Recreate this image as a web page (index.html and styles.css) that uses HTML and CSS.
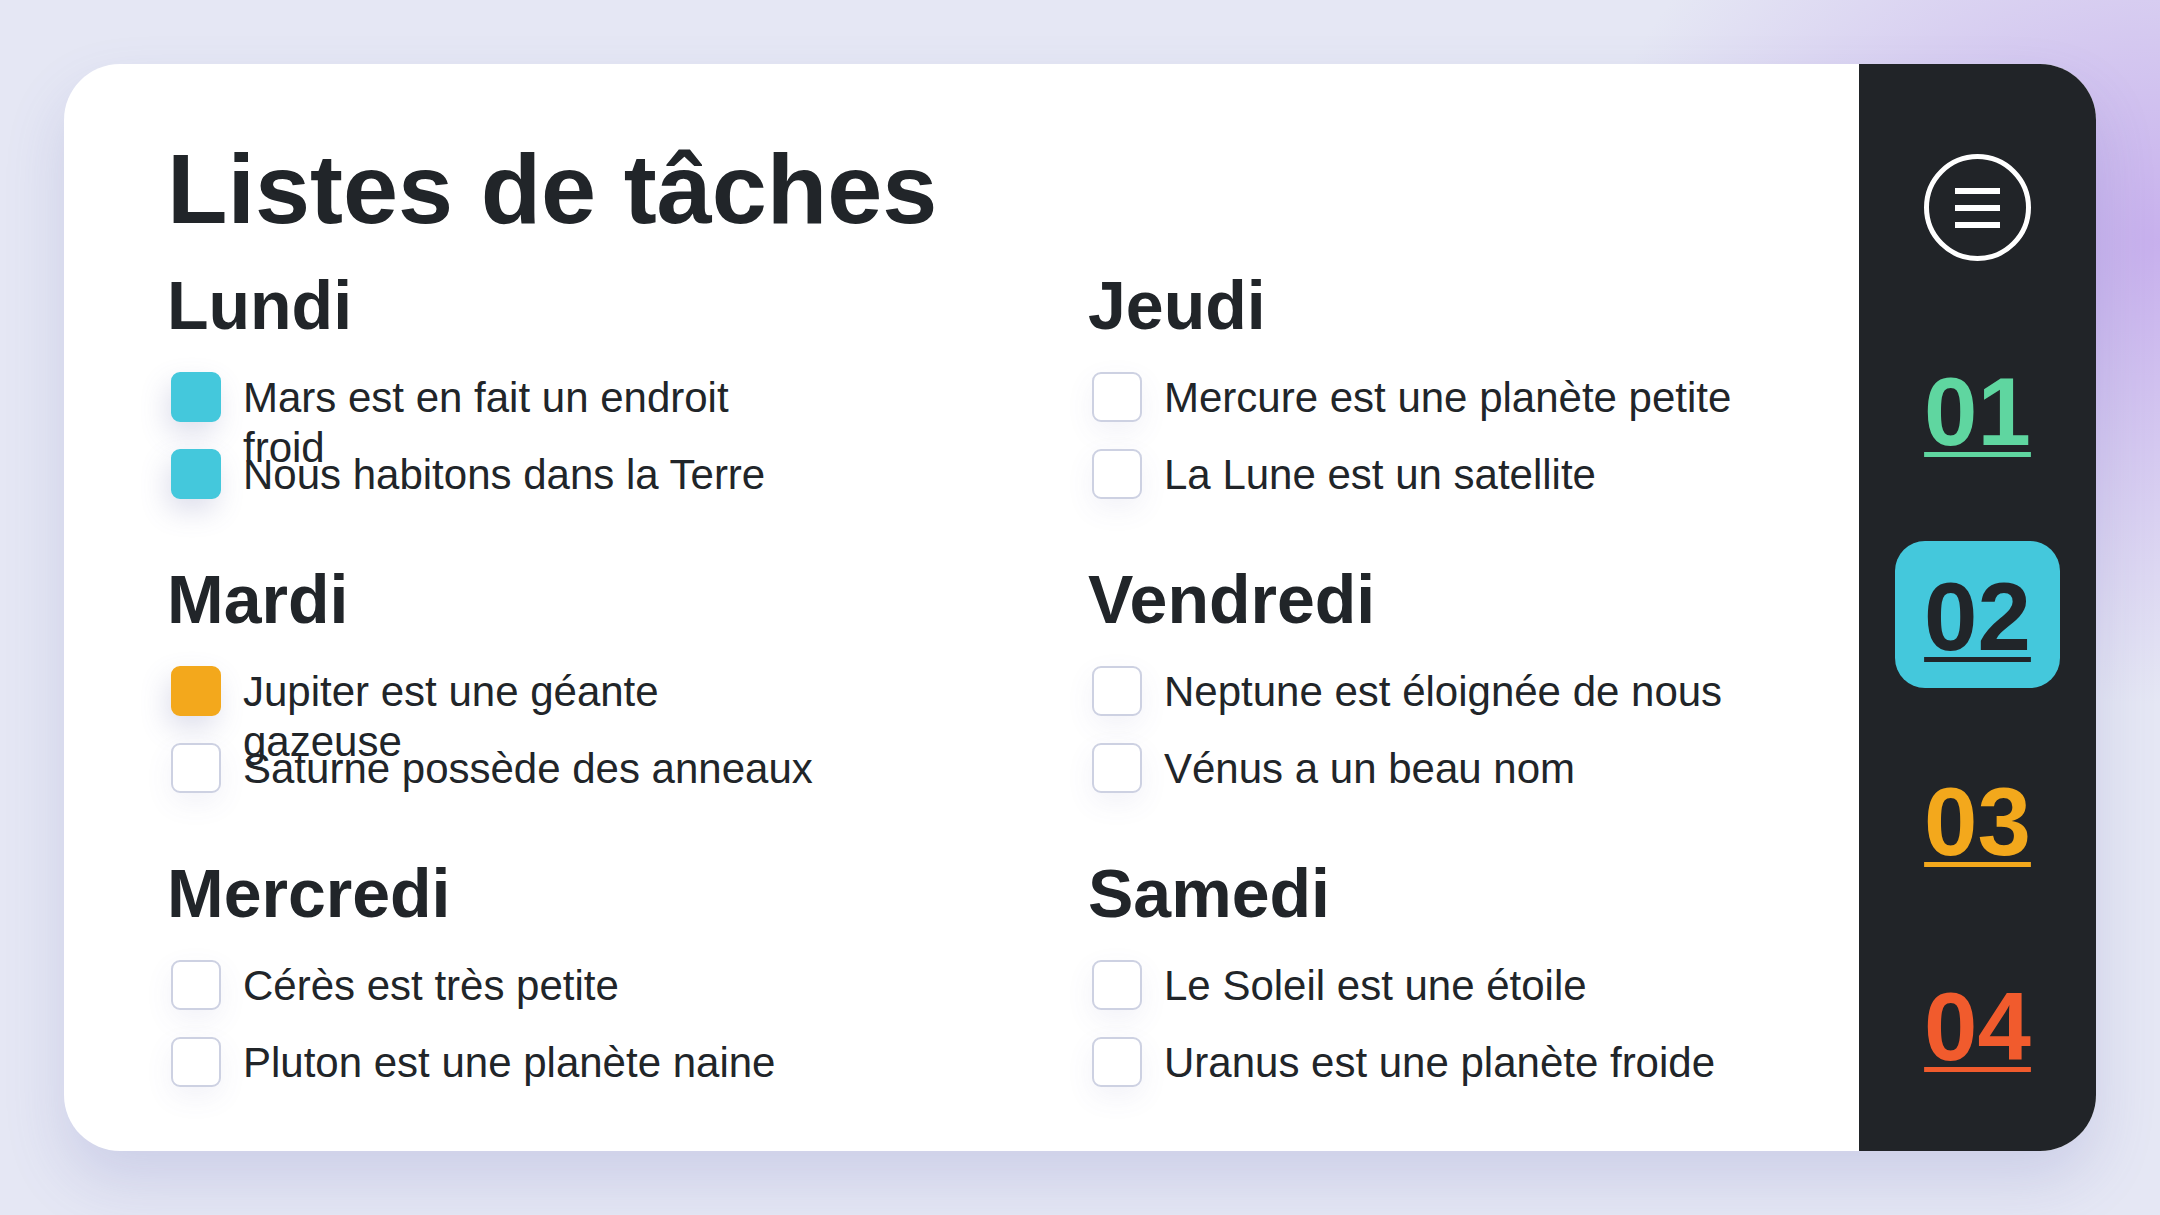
FILE: index.html
```html
<!DOCTYPE html>
<html lang="fr">
  <head>
    <meta charset="UTF-8" />
    <meta name="viewport" content="width=device-width, initial-scale=1.0" />
    <title>Listes de tâches</title>
    <link rel="stylesheet" href="styles.css">
  </head>
  <body>
    <div class="card">
      <main class="content">
        <h1>Listes de tâches</h1>
        <div class="days">
          <section class="day">
            <h2>Lundi</h2>
            <ul class="tasks">
              <li class="task"><input type="checkbox" class="cyan" checked /><span>Mars est en fait un endroit froid</span></li>
              <li class="task"><input type="checkbox" class="cyan" checked /><span>Nous habitons dans la Terre</span></li>
            </ul>
          </section>
          <section class="day">
            <h2>Mardi</h2>
            <ul class="tasks">
              <li class="task"><input type="checkbox" class="orange" checked /><span>Jupiter est une géante gazeuse</span></li>
              <li class="task"><input type="checkbox" /><span>Saturne possède des anneaux</span></li>
            </ul>
          </section>
          <section class="day">
            <h2>Mercredi</h2>
            <ul class="tasks">
              <li class="task"><input type="checkbox" /><span>Cérès est très petite</span></li>
              <li class="task"><input type="checkbox" /><span>Pluton est une planète naine</span></li>
            </ul>
          </section>
          <section class="day">
            <h2>Jeudi</h2>
            <ul class="tasks">
              <li class="task"><input type="checkbox" /><span>Mercure est une planète petite</span></li>
              <li class="task"><input type="checkbox" /><span>La Lune est un satellite</span></li>
            </ul>
          </section>
          <section class="day">
            <h2>Vendredi</h2>
            <ul class="tasks">
              <li class="task"><input type="checkbox" /><span>Neptune est éloignée de nous</span></li>
              <li class="task"><input type="checkbox" /><span>Vénus a un beau nom</span></li>
            </ul>
          </section>
          <section class="day">
            <h2>Samedi</h2>
            <ul class="tasks">
              <li class="task"><input type="checkbox" /><span>Le Soleil est une étoile</span></li>
              <li class="task"><input type="checkbox" /><span>Uranus est une planète froide</span></li>
            </ul>
          </section>
        </div>
      </main>
      <aside class="sidebar">
        <button class="menu" title="menu"><span></span><span></span><span></span></button>
        <nav class="pages">
          <a href="#" class="page green">01</a>
          <a href="#" class="page active">02</a>
          <a href="#" class="page orange">03</a>
          <a href="#" class="page red">04</a>
        </nav>
      </aside>
    </div>
  </body>
</html>
```

FILE: styles.css
```css
html,
body {
  margin: 0;
  height: 100%;
}
body {
  box-sizing: border-box;
  padding: 64px;
  font-family: "Liberation Sans", Arial, sans-serif;
  color: #212529;
  background: radial-gradient(ellipse 800px 640px at 100% 20%, rgba(196, 170, 236, 0.9), rgba(196, 170, 236, 0) 72%),
    #e5e7f4;
}
.card {
  display: flex;
  height: 100%;
  background-color: #fff;
  border-radius: 56px;
  overflow: hidden;
  box-shadow: 0 30px 60px rgba(95, 100, 175, 0.18);
}
.content {
  flex: 1;
  padding: 66px 0 0 103px;
}
h1 {
  margin: 0 0 15px;
  font-size: 99px;
  line-height: 1.2;
  font-weight: bold;
}
.days {
  display: grid;
  grid-template-columns: 648px 648px;
  grid-template-rows: repeat(3, auto);
  grid-auto-flow: column;
  column-gap: 273px;
  row-gap: 56px;
}
h2 {
  margin: 0 0 23px;
  font-size: 68px;
  line-height: 82px;
}
.tasks {
  list-style: none;
  margin: 0;
  padding: 0;
  display: flex;
  flex-direction: column;
  gap: 21px;
}
.task {
  display: flex;
  align-items: flex-start;
  height: 56px;
  font-size: 42px;
}
.task input {
  appearance: none;
  flex: none;
  width: 50px;
  height: 50px;
  margin: 3px 3px 3px 4px;
  border: 2px solid #cdd1e2;
  border-radius: 9px;
  background-color: #fff;
  box-shadow: 0 10px 28px rgba(90, 95, 160, 0.08);
  cursor: pointer;
}
.task input.cyan:checked {
  background-color: #44c8dc;
  border-color: #44c8dc;
  box-shadow: -4px 12px 28px rgba(90, 95, 160, 0.2);
}
.task input.orange:checked {
  background-color: #f3a81c;
  border-color: #f3a81c;
  box-shadow: -4px 12px 28px rgba(90, 95, 160, 0.2);
}
.task span {
  display: block;
  width: 572px;
  height: 50px;
  margin: 4px 0 0 19px;
  line-height: 50px;
}
.sidebar {
  flex: none;
  width: 237px;
  background-color: #212428;
  display: flex;
  flex-direction: column;
  align-items: center;
  padding-top: 90px;
}
.menu {
  box-sizing: border-box;
  width: 107px;
  height: 107px;
  padding: 0;
  border: 5px solid #fff;
  border-radius: 50%;
  background: none;
  display: flex;
  flex-direction: column;
  align-items: center;
  justify-content: center;
  gap: 11px;
  cursor: pointer;
}
.menu span {
  display: block;
  width: 45px;
  height: 6px;
  background-color: #fff;
}
.pages {
  margin-top: 75px;
  display: flex;
  flex-direction: column;
  align-items: center;
  gap: 58px;
}
.page {
  display: block;
  padding: 21px 29px 16px;
  border-radius: 30px;
  font-size: 96px;
  font-weight: bold;
  line-height: 110px;
  text-decoration: underline;
  text-decoration-thickness: 5px;
  text-underline-offset: 7px;
}
.green {
  color: #5fd6a0;
}
.orange {
  color: #f3a81c;
}
.red {
  color: #f15b2d;
}
.active {
  color: #212529;
  background-color: #44c8dc;
}
```
